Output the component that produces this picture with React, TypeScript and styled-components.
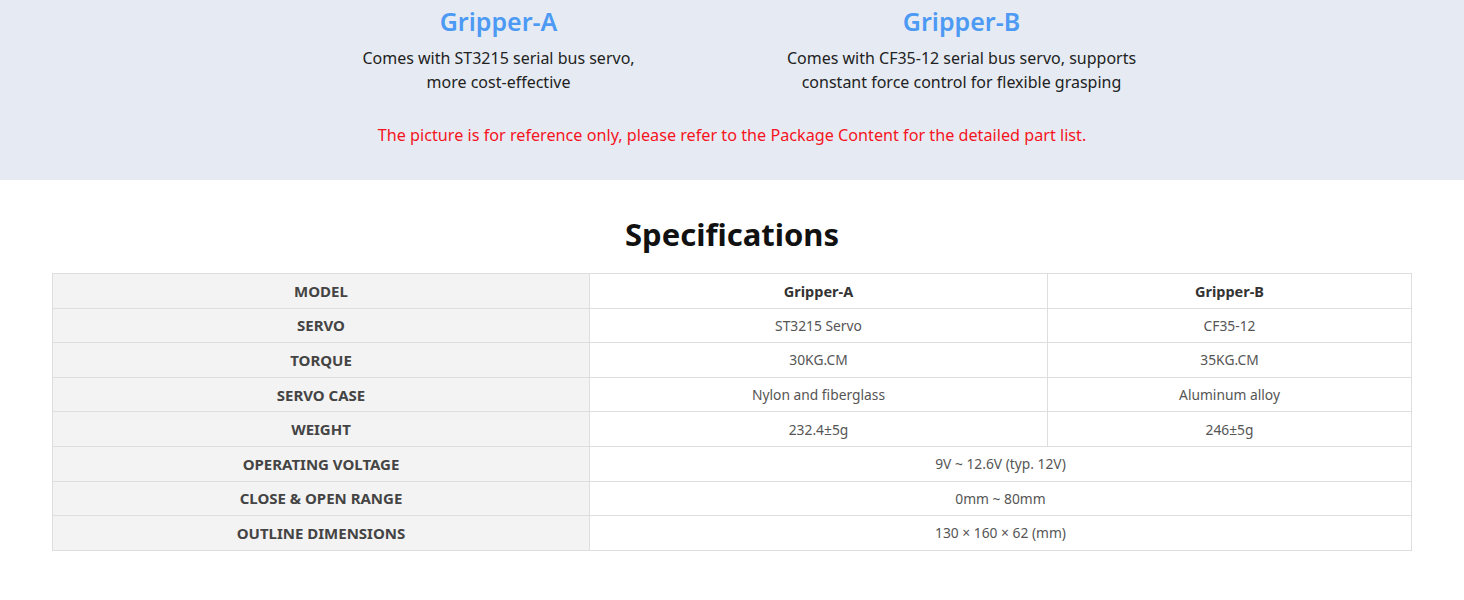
import styled, { createGlobalStyle } from 'styled-components'

const GlobalStyle = createGlobalStyle`
  body {
    margin: 0;
    background: #fff;
    font-family: 'Noto Sans', 'Liberation Sans', sans-serif;
  }
`

const Band = styled('section')`
  height: 180px;
  background-color: #e6ebf3;
  display: flex;
  flex-direction: column;
  align-items: center;
  box-sizing: border-box;
`

const Versions = styled('div')`
  display: grid;
  grid-template-columns: 463px 463px;
  margin-right: 4px;
`

const Version = styled('div')`
  display: flex;
  flex-direction: column;
  align-items: center;
  text-align: center;
`

const VersionTitle = styled('h3')`
  margin: 3px 0 0;
  font-size: 25px;
  line-height: 36px;
  font-weight: 600;
  color: #4d9af5;
`

const VersionText = styled('p')`
  margin: 7px 0 0;
  font-size: 16px;
  line-height: 24px;
  color: #222;
`

const Note = styled('p')`
  margin: 29px 0 0;
  font-size: 16.2px;
  line-height: 24px;
  color: #f5141e;
`

const Specs = styled('section')`
  padding: 32px 52px 0 52px;
  display: flex;
  flex-direction: column;
  align-items: center;
`

const SpecsTitle = styled('h2')`
  margin: 0 0 16px;
  font-size: 31px;
  line-height: 45px;
  font-weight: 700;
  color: #111;
`

const Table = styled('table')`
  width: 100%;
  border-collapse: collapse;
  table-layout: fixed;
`

const Label = styled('th')`
  width: 537px;
  height: 34.6px;
  padding: 0;
  box-sizing: border-box;
  border: 1px solid #dedede;
  background-color: #f3f3f3;
  color: #444;
  font-size: 15px;
  font-weight: 700;
  text-transform: uppercase;
  text-align: center;
`

const Cell = styled('td')<{ $head?: boolean }>`
  height: 34.6px;
  padding: 0;
  box-sizing: border-box;
  border: 1px solid #dedede;
  color: ${({ $head }) => ($head ? '#333' : '#555')};
  font-size: ${({ $head }) => ($head ? '14.5px' : '13.8px')};
  font-weight: ${({ $head }) => ($head ? 700 : 400)};
  text-align: center;
`

const rows: [string, string, string?][] = [
  ['Servo', 'ST3215 Servo', 'CF35-12'],
  ['Torque', '30KG.CM', '35KG.CM'],
  ['Servo case', 'Nylon and fiberglass', 'Aluminum alloy'],
  ['Weight', '232.4±5g', '246±5g'],
  ['Operating voltage', '9V ~ 12.6V (typ. 12V)'],
  ['Close & open range', '0mm ~ 80mm'],
  ['Outline dimensions', '130 × 160 × 62 (mm)'],
]

function App() {
  return (
    <>
      <GlobalStyle />
      <Band>
        <Versions>
          <Version>
            <VersionTitle>Gripper-A</VersionTitle>
            <VersionText>
              Comes with ST3215 serial bus servo,
              <br />
              more cost-effective
            </VersionText>
          </Version>
          <Version>
            <VersionTitle>Gripper-B</VersionTitle>
            <VersionText>
              Comes with CF35-12 serial bus servo, supports
              <br />
              constant force control for flexible grasping
            </VersionText>
          </Version>
        </Versions>
        <Note>The picture is for reference only, please refer to the Package Content for the detailed part list.</Note>
      </Band>

      <Specs>
        <SpecsTitle>Specifications</SpecsTitle>
        <Table>
          <colgroup>
            <col style={{ width: 537 }} />
            <col style={{ width: 458 }} />
            <col />
          </colgroup>
          <tbody>
            <tr>
              <Label>Model</Label>
              <Cell $head>Gripper-A</Cell>
              <Cell $head>Gripper-B</Cell>
            </tr>
            {rows.map(([label, a, b]) => (
              <tr key={label}>
                <Label>{label}</Label>
                {b === undefined ? (
                  <Cell colSpan={2}>{a}</Cell>
                ) : (
                  <>
                    <Cell>{a}</Cell>
                    <Cell>{b}</Cell>
                  </>
                )}
              </tr>
            ))}
          </tbody>
        </Table>
      </Specs>
    </>
  )
}

export default App
